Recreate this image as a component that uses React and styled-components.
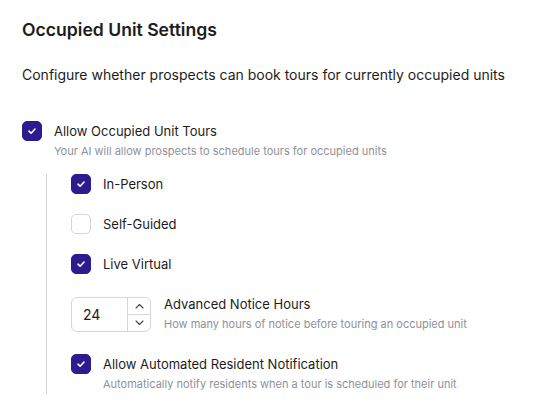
import React from "react";
import styled, { createGlobalStyle } from "styled-components";

const GlobalStyle = createGlobalStyle`
  body {
    margin: 0;
    background: #fff;
    font-family: Inter, "Noto Sans", sans-serif;
    color: #1a1a1a;
  }
`;

const Container = styled.div`
  padding: 16px 22px;
`;

const Title = styled.h2`
  margin: 0;
  font-size: 17.6px;
  line-height: 28px;
  font-weight: 600;
  color: #1c1c1c;
`;

const Description = styled.p`
  margin: 21px 0 0;
  font-size: 14px;
  line-height: 20px;
  color: #1c1c1c;
`;

const Option = styled.div`
  display: flex;
  align-items: ${(p) => (p.$center ? "center" : "flex-start")};
  gap: ${(p) => p.$gap || 12}px;
  margin-top: ${(p) => p.$top || 0}px;
`;

const Box = styled.span`
  flex: none;
  width: 20px;
  height: 20px;
  box-sizing: border-box;
  border-radius: 5px;
  display: flex;
  align-items: center;
  justify-content: center;
  background: ${(p) => (p.$checked ? "#2f1b90" : "#fff")};
  border: 1px solid ${(p) => (p.$checked ? "#2f1b90" : "#d4d6dc")};
`;

const Text = styled.div`
  display: flex;
  flex-direction: column;
`;

const Label = styled.span`
  font-size: 13px;
  line-height: 20px;
  color: #1c1c1c;
`;

const Hint = styled.span`
  font-size: 11px;
  line-height: 20px;
  color: #8e9199;
`;

const Nested = styled.div`
  margin: 13px 0 0 24px;
  padding-left: 24px;
  border-left: 1px solid #d3d5da;
  display: flex;
  flex-direction: column;
  gap: 20px;
`;

const NumberField = styled.div`
  flex: none;
  display: flex;
  width: 80px;
  height: 35px;
  box-sizing: border-box;
  border: 1px solid #d4d6dc;
  border-radius: 6px;
  overflow: hidden;
`;

const NumberValue = styled.div`
  flex: 1;
  display: flex;
  align-items: center;
  padding-left: 11px;
  font-size: 14px;
  color: #1c1c1c;
`;

const Spinner = styled.div`
  width: 22px;
  border-left: 1px solid #d4d6dc;
  display: flex;
  flex-direction: column;
`;

const SpinButton = styled.div`
  flex: 1;
  display: flex;
  align-items: center;
  justify-content: center;
  & + & {
    border-top: 1px solid #d4d6dc;
  }
`;

const Check = () => (
  <svg width="10" height="10" viewBox="0 0 10 10" fill="none">
    <path
      d="M2 5.2 L4.1 7.2 L8 3"
      stroke="#fff"
      strokeWidth="1.6"
      strokeLinecap="round"
      strokeLinejoin="round"
    />
  </svg>
);

const Chevron = ({ up }) => (
  <svg width="9" height="6" viewBox="0 0 9 6" fill="none">
    <path
      d={up ? "M1 5 L4.5 1.5 L8 5" : "M1 1 L4.5 4.5 L8 1"}
      stroke="#444"
      strokeWidth="1.1"
      strokeLinecap="round"
      strokeLinejoin="round"
    />
  </svg>
);

const Checkbox = ({ checked, label, hint, top }) => (
  <Option $top={top}>
    <Box $checked={checked}>{checked && <Check />}</Box>
    <Text>
      <Label>{label}</Label>
      {hint && <Hint>{hint}</Hint>}
    </Text>
  </Option>
);

export default function App() {
  return (
    <Container>
      <GlobalStyle />
      <Title>Occupied Unit Settings</Title>
      <Description>
        Configure whether prospects can book tours for currently occupied units
      </Description>

      <Checkbox
        top={36}
        checked
        label="Allow Occupied Unit Tours"
        hint="Your AI will allow prospects to schedule tours for occupied units"
      />

      <Nested>
        <Checkbox checked label="In-Person" />
        <Checkbox label="Self-Guided" />
        <Checkbox checked label="Live Virtual" />
        <Option $center $gap={13}>
          <NumberField>
            <NumberValue>24</NumberValue>
            <Spinner>
              <SpinButton>
                <Chevron up />
              </SpinButton>
              <SpinButton>
                <Chevron />
              </SpinButton>
            </Spinner>
          </NumberField>
          <Text>
            <Label>Advanced Notice Hours</Label>
            <Hint>How many hours of notice before touring an occupied unit</Hint>
          </Text>
        </Option>
        <Checkbox
          checked
          label="Allow Automated Resident Notification"
          hint="Automatically notify residents when a tour is scheduled for their unit"
        />
      </Nested>
    </Container>
  );
}
